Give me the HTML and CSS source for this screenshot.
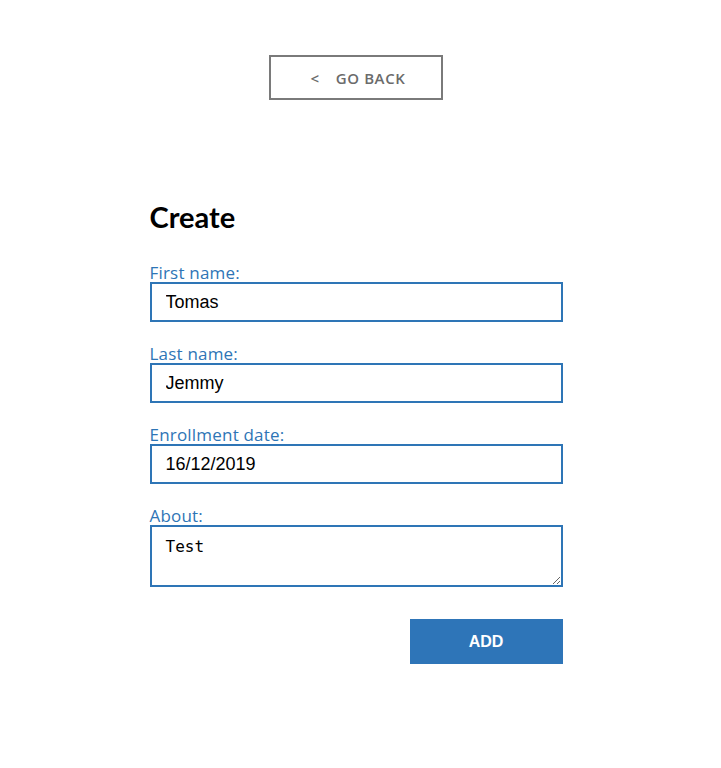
FILE: index.html
```html
<!DOCTYPE html>
<html>
<head>
<meta charset="utf-8">
<link rel="stylesheet" href="styles.css">
</head>
<body>
<div class="page">
  <div class="top">
    <button class="back"><span class="chev">&lt;</span>GO BACK</button>
  </div>
  <form class="form">
    <h1 class="title">Create</h1>
    <label class="field">
      <span class="label">First name:</span>
      <input class="input" type="text" value="Tomas">
    </label>
    <label class="field">
      <span class="label">Last name:</span>
      <input class="input" type="text" value="Jemmy">
    </label>
    <label class="field">
      <span class="label">Enrollment date:</span>
      <input class="input" type="text" value="16/12/2019">
    </label>
    <label class="field">
      <span class="label">About:</span>
      <textarea class="area">Test</textarea>
    </label>
    <div class="actions">
      <button class="add" type="button">ADD</button>
    </div>
  </form>
</div>
</body>
</html>
```
FILE: styles.css
```css
html, body {
  margin: 0;
  padding: 0;
  background: #fff;
}
.page {
  width: 712px;
  padding-top: 55px;
  font-family: "Open Sans", "DejaVu Sans", sans-serif;
}
.top {
  display: flex;
  justify-content: center;
}
.back {
  width: 174px;
  height: 45px;
  border: 2px solid #7a7a7a;
  background: #fff;
  color: #6b6b6b;
  font-family: "Open Sans", sans-serif;
  font-weight: 600;
  font-size: 15px;
  letter-spacing: 0.6px;
  display: flex;
  align-items: center;
  justify-content: center;
  padding: 0 0 0 4px;
}
.chev {
  margin-right: 16px;
  font-size: 15px;
}
.form {
  width: 413px;
  margin: 100px auto 0;
  display: flex;
  flex-direction: column;
}
.title {
  margin: 0 0 29px;
  font-family: "Lato", "Open Sans", sans-serif;
  font-size: 29px;
  line-height: 34px;
  font-weight: 700;
  color: #000;
}
.field {
  display: flex;
  flex-direction: column;
  margin-bottom: 22px;
}
.label {
  color: #2e75b6;
  font-size: 17px;
  line-height: 19px;
  letter-spacing: 0.2px;
}
.input {
  box-sizing: border-box;
  height: 40px;
  border: 2px solid #2e75b6;
  padding: 0 14px;
  font-family: "Liberation Sans", Arial, sans-serif;
  font-size: 18px;
  color: #000;
  outline: none;
}
.area {
  box-sizing: border-box;
  height: 62px;
  border: 2px solid #2e75b6;
  padding: 10px 14px;
  font-family: "DejaVu Sans Mono", monospace;
  font-size: 16px;
  color: #000;
  outline: none;
  resize: vertical;
}
.actions {
  display: flex;
  justify-content: flex-end;
  margin-top: 10px;
}
.add {
  width: 153px;
  height: 45px;
  border: none;
  background: #2e75b8;
  color: #fff;
  font-family: "Liberation Sans", Arial, sans-serif;
  font-weight: 700;
  font-size: 16px;
}
```
